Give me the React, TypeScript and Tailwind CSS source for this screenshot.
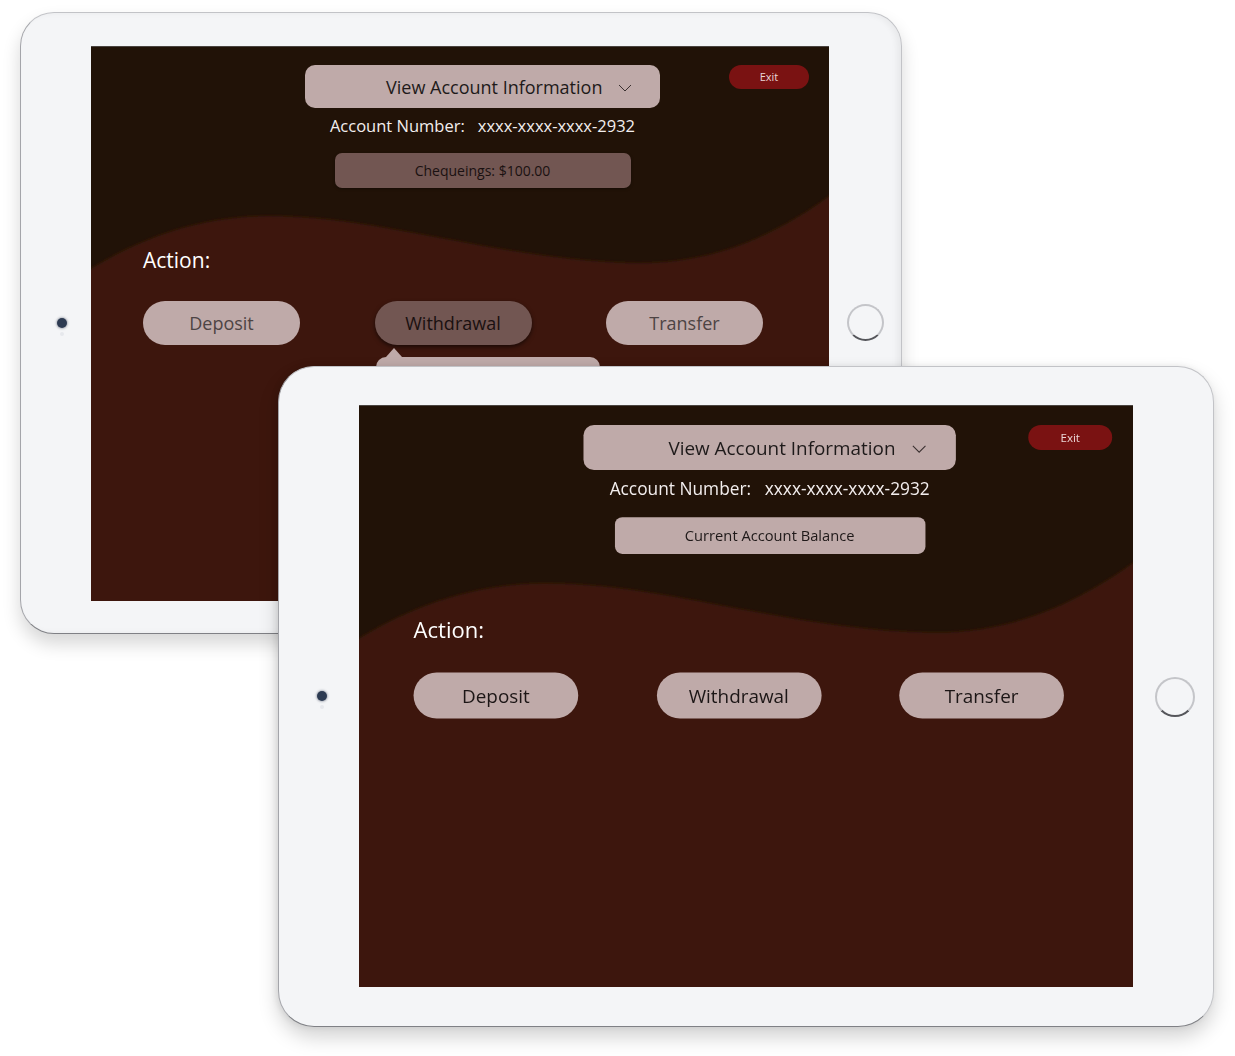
import React from "react";

const font = { fontFamily: '"Open Sans", "Noto Sans", sans-serif' };

function Chevron() {
  return (
    <svg width="14" height="8" viewBox="0 0 14 8" className="ml-[16px] mt-[2px]">
      <polyline points="1,1 7,7 13,1" fill="none" stroke="#3a3030" strokeWidth="1" />
    </svg>
  );
}

function ScreenContent({ variant }: { variant: "a" | "b" }) {
  const isA = variant === "a";
  return (
    <div className="relative w-[738px] h-[554px] bg-[#211207] overflow-hidden" style={font}>
      <svg className="absolute inset-0" width="738" height="554" viewBox="0 0 738 554">
        <defs>
          <filter id={"soft" + variant} x="-5%" y="-5%" width="110%" height="110%">
            <feGaussianBlur stdDeviation="1.5" />
          </filter>
        </defs>
        <path
          d="M-10,228 C40,196 100,170 175,169 C290,168 410,214 545,216 C630,217 695,182 748,142 L748,564 L-10,564 Z"
          fill="#3d1309"
          filter={"url(#soft" + variant + ")"}
        />
      </svg>
      <div className="relative flex flex-col">
        <div className="flex items-start mt-[18px]">
          <div className="ml-[214px] w-[355px] flex flex-col items-center">
            <div className="w-[355px] h-[43px] rounded-[10px] bg-[#bfaaa9] flex items-center pl-[81px]">
              <span className="text-[18px] text-[#1e1a1a] leading-none">View Account Information</span>
              <Chevron />
            </div>
            <div className="mt-[7px] flex items-center text-[16.5px] leading-[22px] text-[#f3eeee]">
              <span>Account Number:</span>
              <span className="ml-[13px]">xxxx-xxxx-xxxx-2932</span>
            </div>
            {isA ? (
              <div className="mt-[16px] w-[296px] h-[35px] rounded-[7px] bg-[#725652] shadow-[0_1px_3px_rgba(0,0,0,0.35)] flex items-center justify-center text-[14px] text-[#1a1111]">
                Chequeings: $100.00
              </div>
            ) : (
              <div className="mt-[16px] w-[296px] h-[35px] rounded-[7px] bg-[#bfaaa9] flex items-center justify-center text-[14px] text-[#1f1919]">
                Current Account Balance
              </div>
            )}
          </div>
          <div className="ml-[69px] w-[80px] h-[24px] rounded-full bg-[#7a1212] flex items-center justify-center text-[11px] text-[#ead6d6]">
            Exit
          </div>
        </div>
        <div className="ml-[52px] mt-[58px] text-[21px] leading-[28px] text-white">Action:</div>
        <div className="ml-[52px] mt-[27px] flex gap-[74.5px]">
          <div
            className={
              isA
                ? "w-[157px] h-[44px] rounded-full bg-[#bfaaa9] flex items-center justify-center text-[18px] text-[#4d4444]"
                : "w-[157px] h-[44px] rounded-full bg-[#bfaaa9] flex items-center justify-center text-[18px] text-[#1c1616]"
            }
          >
            Deposit
          </div>
          <div className="relative">
            <div
              className={
                isA
                  ? "w-[157px] h-[44px] rounded-full bg-[#725652] shadow-[0_2px_4px_rgba(0,0,0,0.55)] flex items-center justify-center text-[18px] text-[#1a1010]"
                  : "w-[157px] h-[44px] rounded-full bg-[#bfaaa9] flex items-center justify-center text-[18px] text-[#1c1616]"
              }
            >
              Withdrawal
            </div>
            {isA && (
              <div className="absolute left-[1px] top-[46px] flex flex-col">
                <svg width="36" height="10" viewBox="0 0 36 10" className="block">
                  <polygon points="10,10 18,1 26,10" fill="#bfaaa9" />
                </svg>
                <div className="w-[224px] h-[60px] rounded-t-[10px] bg-[#bfaaa9]" />
              </div>
            )}
          </div>
          <div
            className={
              isA
                ? "w-[157px] h-[44px] rounded-full bg-[#bfaaa9] flex items-center justify-center text-[18px] text-[#4d4444]"
                : "w-[157px] h-[44px] rounded-full bg-[#bfaaa9] flex items-center justify-center text-[18px] text-[#1c1616]"
            }
          >
            Transfer
          </div>
        </div>
      </div>
    </div>
  );
}

function Camera({ className }: { className: string }) {
  return (
    <div className={className}>
      <div className="flex flex-col items-center">
        <div className="w-[10px] h-[10px] rounded-full bg-[#2d3b52] shadow-[0_0_2px_1px_rgba(60,70,90,0.35)]" />
        <div className="mt-[4px] w-[4px] h-[4px] rounded-full bg-[#e6e8ec]" />
      </div>
    </div>
  );
}

export default function App() {
  return (
    <div className="relative w-[1235px] h-[1056px] bg-white overflow-hidden">
      {/* Back iPad */}
      <div className="absolute left-[20px] top-[12px] w-[882px] h-[622px] rounded-[34px] bg-[#f4f5f7] border-[1.5px] border-[#c2c3c7] border-b-[#7f8085] border-l-[#a4a5aa] shadow-[0_10px_18px_rgba(0,0,0,0.16),inset_-4px_0_6px_rgba(0,0,0,0.05)] pl-[70px] pt-[33px]">
        <div className="w-[738px] border-t border-[#4a4440]">
          <ScreenContent variant="a" />
        </div>
        <Camera className="absolute left-[36px] top-[305px]" />
        <div className="absolute left-[826px] top-[291px] w-[37px] h-[37px] rounded-full border-[2px] border-[#c4c5c9] border-b-[#55565b] bg-[#f4f5f7]" />
      </div>

      {/* Front iPad */}
      <div className="absolute left-[278px] top-[366px] w-[936px] h-[661px] rounded-[36px] bg-[#f4f5f7] border-[1.5px] border-[#c2c3c7] border-b-[#7f8085] border-l-[#a4a5aa] shadow-[0_10px_20px_rgba(0,0,0,0.18),-2px_0_6px_rgba(0,0,0,0.08)] pl-[80px] pt-[38px]">
        <div className="w-[774px] h-[582px] overflow-hidden border-t border-[#4a4440]">
          <div className="scale-[1.049] origin-top-left">
            <ScreenContent variant="b" />
          </div>
        </div>
        <Camera className="absolute left-[38px] top-[324px]" />
        <div className="absolute left-[876px] top-[310px] w-[40px] h-[40px] rounded-full border-[2px] border-[#c4c5c9] border-b-[#55565b] bg-[#f4f5f7]" />
      </div>
    </div>
  );
}
